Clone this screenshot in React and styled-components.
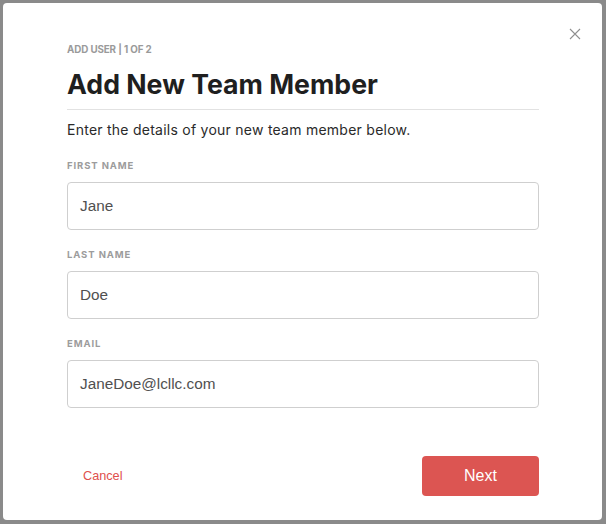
import React from "react";
import styled, { createGlobalStyle } from "styled-components";

const Global = createGlobalStyle`
  html, body { margin: 0; padding: 0; background: #8a8a8a; }
  body { width: 606px; height: 524px; overflow: hidden; }
  * { box-sizing: border-box; }
`;

const Overlay = styled.div`
  width: 606px;
  height: 524px;
  padding: 3px 4px 4px 3px;
  display: flex;
`;

const Modal = styled.div`
  position: relative;
  flex: 1;
  background: #fff;
  border-radius: 4px;
  padding: 41px 63px 0 64px;
  display: flex;
  flex-direction: column;
  font-family: "Inter", "Lato", sans-serif;
`;

const Close = styled.button`
  position: absolute;
  top: 22px;
  right: 18px;
  width: 18px;
  height: 18px;
  padding: 0;
  border: 0;
  background: none;
  display: flex;
  align-items: center;
  justify-content: center;
`;

const Step = styled.div`
  font-size: 9.8px;
  line-height: 12px;
  font-weight: 700;
  color: #9a9a9a;
  letter-spacing: -0.1px;
`;

const Title = styled.h1`
  margin: 13px 0 0;
  font-size: 26.7px;
  line-height: 30px;
  font-weight: 700;
  color: #1f1f1f;
  letter-spacing: 0;
`;

const Divider = styled.hr`
  margin: 10px 0 0;
  border: 0;
  border-top: 1px solid #e2e2e2;
`;

const Intro = styled.p`
  margin: 10px 0 0;
  font-size: 14px;
  line-height: 20px;
  letter-spacing: 0.25px;
  color: #2a2a2a;
`;

const Field = styled.div`
  margin-top: ${(p) => p.$top}px;
  display: flex;
  flex-direction: column;
`;

const Label = styled.label`
  font-size: 9.5px;
  line-height: 12px;
  font-weight: 700;
  color: #9c9c9c;
  letter-spacing: 0.9px;
`;

const Input = styled.div`
  margin-top: 10px;
  height: 48px;
  border: 1px solid #cfcfcf;
  border-radius: 4px;
  padding: 0 12px;
  display: flex;
  align-items: center;
  font-family: "Liberation Sans", Arial, sans-serif;
  font-size: 15.3px;
  color: #505050;
`;

const Footer = styled.div`
  margin-top: 48px;
  display: flex;
  align-items: center;
  justify-content: space-between;
`;

const Cancel = styled.button`
  border: 0;
  background: none;
  padding: 0 0 0 16px;
  font-family: "Liberation Sans", Arial, sans-serif;
  font-size: 12.7px;
  color: #e0504d;
`;

const Next = styled.button`
  width: 117px;
  height: 40px;
  border: 0;
  border-radius: 4px;
  background: #dc5552;
  color: #fff;
  font-family: "Liberation Sans", Arial, sans-serif;
  font-size: 16px;
`;

export default function App() {
  return (
    <>
      <Global />
      <Overlay>
        <Modal>
          <Close aria-label="Close">
            <svg width="12" height="12" viewBox="0 0 12 12">
              <path d="M1 1 L11 11 M11 1 L1 11" stroke="#8f8f8f" strokeWidth="1.1" fill="none" />
            </svg>
          </Close>
          <Step>ADD USER | 1 OF 2</Step>
          <Title>Add New Team Member</Title>
          <Divider />
          <Intro>Enter the details of your new team member below.</Intro>
          <Field $top={20}>
            <Label>FIRST NAME</Label>
            <Input>Jane</Input>
          </Field>
          <Field $top={19}>
            <Label>LAST NAME</Label>
            <Input>Doe</Input>
          </Field>
          <Field $top={19}>
            <Label>EMAIL</Label>
            <Input>JaneDoe@lcllc.com</Input>
          </Field>
          <Footer>
            <Cancel>Cancel</Cancel>
            <Next>Next</Next>
          </Footer>
        </Modal>
      </Overlay>
    </>
  );
}
